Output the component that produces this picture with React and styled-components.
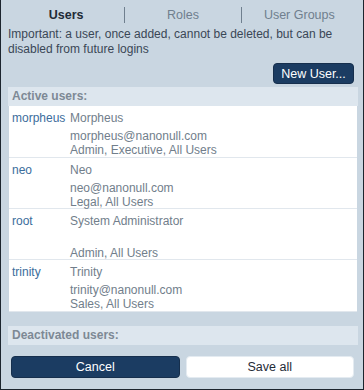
import React from "react";
import styled, { createGlobalStyle } from "styled-components";

const GlobalStyle = createGlobalStyle`
  html, body {
    margin: 0;
    padding: 0;
    background: #c9d6e1;
  }
  * {
    box-sizing: border-box;
  }
`;

const Panel = styled.div`
  width: 364px;
  height: 390px;
  background: #c9d6e1;
  border: 1px solid #1c252e;
  border-top: none;
  display: flex;
  flex-direction: column;
  font-family: "Liberation Sans", Arial, sans-serif;
  font-size: 12px;
  overflow: hidden;
`;

const Tabs = styled.div`
  display: grid;
  grid-template-columns: repeat(3, 1fr);
  margin: 0 6px 0 7px;
  height: 27px;
  padding-top: 3px;
  align-items: center;
`;

const Tab = styled.div`
  text-align: center;
  font-size: 12.5px;
  line-height: 16px;
  font-weight: ${(p) => (p.$active ? 700 : 400)};
  color: ${(p) => (p.$active ? "#1f2b37" : "#6f7f8e")};
  border-left: ${(p) => (p.$first ? "none" : "1px solid #6f7f8e")};
`;

const Notice = styled.p`
  margin: 0;
  padding: 0 8px 0 7px;
  line-height: 15px;
  color: #3a4756;
  font-size: 12px;
`;

const Toolbar = styled.div`
  display: flex;
  justify-content: flex-end;
  padding: 6px 9px 0 0;
`;

const Button = styled.button`
  height: ${(p) => p.$h || 21}px;
  width: ${(p) => (p.$w ? p.$w + "px" : "auto")};
  padding: 0 4px;
  white-space: nowrap;
  border-radius: 4px;
  border: 1px solid ${(p) => (p.$light ? "#e4ebf1" : "#162f4d")};
  background: ${(p) => (p.$light ? "#ffffff" : "#1b3c62")};
  color: ${(p) => (p.$light ? "#1f2b37" : "#ffffff")};
  font-family: "Liberation Sans", Arial, sans-serif;
  font-size: 12.5px;
  cursor: pointer;
`;

const SectionHeader = styled.div`
  margin: ${(p) => p.$mt || 0}px 5px 0 7px;
  height: 19px;
  line-height: 19px;
  background: #dde6ee;
  padding-left: 4px;
  font-weight: 700;
  font-size: 12px;
  color: #7d8995;
`;

const List = styled.div`
  margin: 0 6px 0 8px;
  background: #ffffff;
  height: 206px;
  overflow: hidden;
`;

const Row = styled.div`
  display: grid;
  grid-template-columns: 58px 1fr;
  padding: 5px 0 0 3px;
  border-bottom: 1px solid #e1e7ed;
  height: ${(p) => p.$h}px;
`;

const Login = styled.div`
  color: #3c6d9c;
  font-size: 12px;
  line-height: 15px;
`;

const Details = styled.div`
  display: flex;
  flex-direction: column;
  color: #717e8b;
  font-size: 12px;
  line-height: 14px;
`;

const Name = styled.div`
  line-height: 15px;
  margin-bottom: 3px;
`;

const Line = styled.div`
  height: 14px;
`;

const Footer = styled.div`
  display: grid;
  grid-template-columns: 1fr 1fr;
  gap: 6px;
  padding: 11px 9px 0 10px;
`;

const users = [
  { login: "morpheus", name: "Morpheus", email: "morpheus@nanonull.com", groups: "Admin, Executive, All Users", h: 52 },
  { login: "neo", name: "Neo", email: "neo@nanonull.com", groups: "Legal, All Users", h: 51 },
  { login: "root", name: "System Administrator", email: "", groups: "Admin, All Users", h: 51 },
  { login: "trinity", name: "Trinity", email: "trinity@nanonull.com", groups: "Sales, All Users", h: 52 },
];

export default function App() {
  return (
    <>
      <GlobalStyle />
      <Panel>
        <Tabs>
          <Tab $active $first>Users</Tab>
          <Tab>Roles</Tab>
          <Tab>User Groups</Tab>
        </Tabs>
        <Notice>
          Important: a user, once added, cannot be deleted, but can be disabled from future logins
        </Notice>
        <Toolbar>
          <Button $w={81}>New User...</Button>
        </Toolbar>
        <SectionHeader $mt={3}>Active users:</SectionHeader>
        <List>
          {users.map((u) => (
            <Row key={u.login} $h={u.h}>
              <Login>{u.login}</Login>
              <Details>
                <Name>{u.name}</Name>
                <Line>{u.email}</Line>
                <Line>{u.groups}</Line>
              </Details>
            </Row>
          ))}
        </List>
        <SectionHeader $mt={14}>Deactivated users:</SectionHeader>
        <Footer>
          <Button $h={22}>Cancel</Button>
          <Button $h={22} $light>Save all</Button>
        </Footer>
      </Panel>
    </>
  );
}
